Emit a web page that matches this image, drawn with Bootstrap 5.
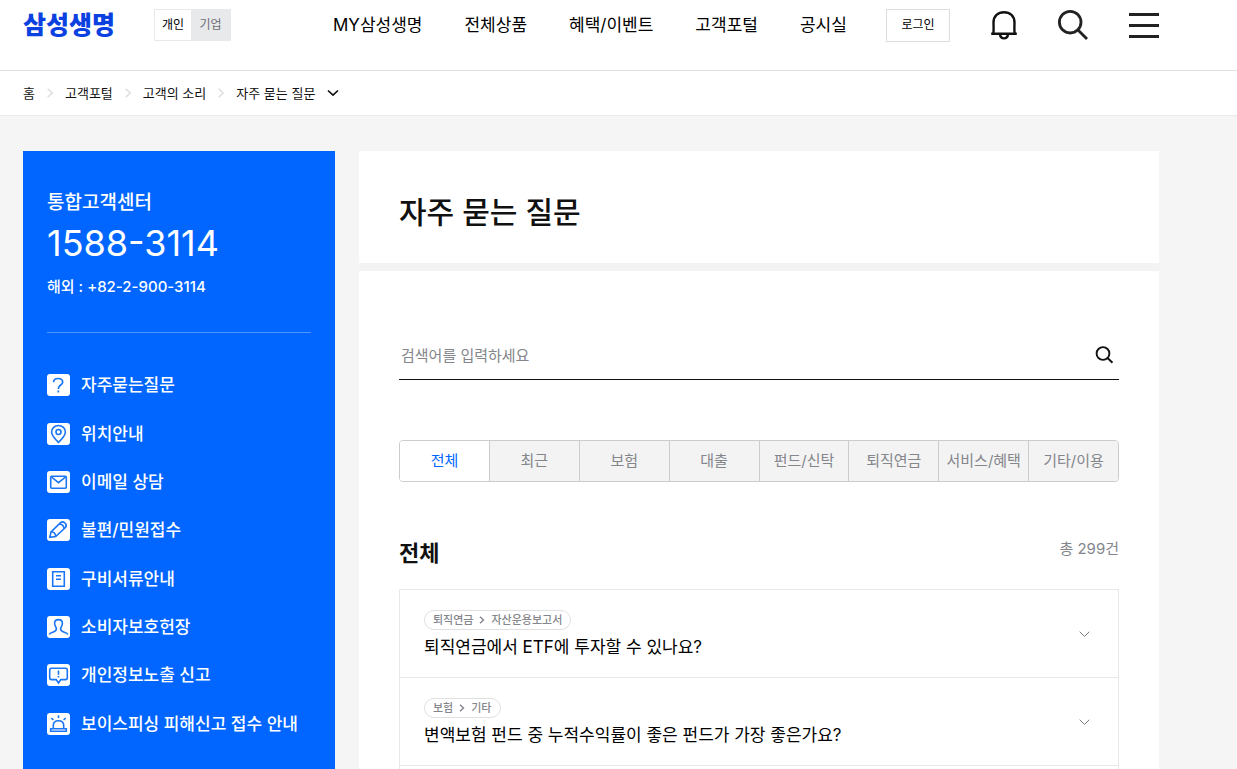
<!DOCTYPE html>
<html lang="ko">
<head>
<meta charset="utf-8">
<meta name="viewport" content="width=device-width, initial-scale=1">
<title>자주 묻는 질문 | 삼성생명</title>
<link href="https://cdn.jsdelivr.net/npm/bootstrap@5.3.0/dist/css/bootstrap.min.css" rel="stylesheet">
<style>
  body { font-family: Inter, "Noto Sans CJK KR", sans-serif; font-size: 17px; line-height: 24px; color: #000; background: #f5f5f5; }
  a { color: inherit; text-decoration: none; }
  button { color: inherit; }
  svg { display: block; flex: none; fill: none; }
  svg:not([stroke]) { stroke: currentColor; }
  .wrap { padding-left: 23px; padding-right: 78px; }
  .site-head { flex: none; border-bottom: 1px solid #e2e2e2; padding-bottom: 20px; }
  .head-row { height: 50px; }
  .brand { width: 131px; font-size: 25px; font-weight: 900; color: #0a41e0; line-height: 32px; }
  .seg { width: 77px; height: 32px; border: 1px solid #e8e9eb; font-size: 12px; margin-right: 102px; }
  .seg a { width: 36px; line-height: 30px; text-align: center; }
  .seg a + a { flex: 1; background: #e8e9eb; color: #6b6e74; }
  .gnb { gap: 42px; }
  .tools { gap: 41px; }
  .login { width: 64px; height: 33px; border: 1px solid #ddd; background: #fff; font-size: 12px; padding: 0; }
  .plain { border: 0; background: none; padding: 0; }
  .crumbs { flex: none; height: 45px; border-bottom: 1px solid #ebebeb; font-size: 13px; color: #111; }
  .crumbs ol { gap: 12px; }
  .crumbs li { display: flex; align-items: center; gap: 12px; }
  .page-body { padding-top: 35px; gap: 24px; min-height: 0; overflow: hidden; }
  .side { width: 312px; flex: none; background: #06f; color: #fff; padding: 37px 24px 0; font-weight: 500; }
  .side-title { font-size: 19px; line-height: 30px; }
  .tel { font-size: 36px; line-height: 50px; font-weight: 400; }
  .tel-abroad { font-size: 15px; line-height: 37px; }
  .side hr { margin: 27px 0 28px; border-top: 1px solid #4d94ff; opacity: 1; }
  .menu { height: 387px; display: grid; grid-template-rows: repeat(8, 1fr); align-items: center; }
  .menu a { display: flex; align-items: center; gap: 11px; }
  .menu svg { background: #fff; border-radius: 3px; color: #1a76f5; }
  .panel { background: #fff; padding: 0 40px; }
  .title-panel { height: 112px; padding-top: 40px; }
  .title-panel h1 { font-size: 30px; line-height: 42px; font-weight: 500; margin: 0; color: #111; }
  .gapline { height: 8px; background: #f3f3f3; }
  .list-panel { padding-top: 60px; }
  .search { height: 49px; border-bottom: 1px solid #111; }
  .search input { flex: 1; min-width: 0; border: 0; outline: 0; padding: 0 2px; font-size: 15px; height: 48px; }
  .search input::placeholder { color: #84868c; opacity: 1; }
  .tabs { margin-top: 60px; height: 42px; border: 1px solid #ccc; border-radius: 4px; overflow: hidden; font-size: 15px; color: #84868c; }
  .tabs button { flex: 1 1 0; min-width: 0; white-space: nowrap; background: #f3f3f3; border: 0; padding: 0; }
  .tabs button + button { border-left: 1px solid #ccc; }
  .tabs .on { background: #fff; color: #06f; }
  .list-top { margin-top: 54px; height: 53px; }
  .list-top h2 { font-size: 22px; line-height: 34px; font-weight: 700; margin: 0; color: #111; }
  .total { font-size: 15px; line-height: 26px; color: #84868c; }
  .faq { border: 1px solid #e6e8ea; }
  .faq li { min-height: 88px; border-bottom: 1px solid #e6e8ea; }
  .faq button { width: 100%; height: 87px; padding: 0 28px 2px 24px; text-align: left; }
  .faq button > svg { margin-top: 4px; }
  .path { display: inline-flex; align-items: center; gap: 6px; height: 20px; padding: 0 8px; border: 1px solid #e0e0e0; border-radius: 10px; font-size: 11px; font-weight: 500; color: #84868c; line-height: 18px; }
  .q { display: block; line-height: 26px; margin-top: 4px; }
</style>
</head>
<body class="vh-100 overflow-hidden d-flex flex-column">
<header class="site-head bg-white wrap">
  <div class="head-row d-flex align-items-center">
    <a class="brand" href="#">삼성생명</a>
    <div class="seg d-flex"><a href="#">개인</a><a href="#">기업</a></div>
    <nav class="gnb d-flex"><a href="#">MY삼성생명</a><a href="#">전체상품</a><a href="#">혜택/이벤트</a><a href="#">고객포털</a><a href="#">공시실</a></nav>
    <div class="tools d-flex align-items-center ms-auto">
      <button class="login" type="button">로그인</button>
      <button class="plain" type="button" aria-label="알림"><svg width="26" height="30" viewBox="0 0 26 30" stroke="#111" stroke-width="2.4"><path d="M2.2 23.7C3 20.5 2.500 17 2.500 12.500C2.500 6 7 2.200 13 2.200S23.500 6 23.500 12.500C23.500 17 23 20.500 23.800 23.700M.2 23.800H25.800M8.900 24C9.300 27 10.800 28.400 13 28.400S16.700 27 17.100 24"/></svg></button>
      <button class="plain" type="button" aria-label="검색"><svg width="30" height="30" viewBox="0 0 30 30" stroke="#222" stroke-width="2.800"><circle cx="12.200" cy="12.200" r="10.800"/><path d="M20 20l9 9"/></svg></button>
      <button class="plain" type="button" aria-label="전체메뉴"><svg width="30" height="26" viewBox="0 0 30 26" stroke="#222" stroke-width="3"><path d="M0 2.500H30M0 13.500H30M0 24.500H30"/></svg></button>
    </div>
  </div>
</header>
<nav class="crumbs bg-white wrap d-flex align-items-center" aria-label="현재 위치">
  <ol class="list-unstyled d-flex mb-0">
    <li><a href="#">홈</a><svg width="6" height="10" viewBox="0 0 6 10" stroke="#ddd" stroke-width="1.500"><path d="M.7.7L5.200 5L.7 9.300"/></svg></li>
    <li><a href="#">고객포털</a><svg width="6" height="10" viewBox="0 0 6 10" stroke="#ddd" stroke-width="1.500"><path d="M.7.7L5.200 5L.7 9.300"/></svg></li>
    <li><a href="#">고객의 소리</a><svg width="6" height="10" viewBox="0 0 6 10" stroke="#ddd" stroke-width="1.500"><path d="M.7.7L5.200 5L.7 9.300"/></svg></li>
    <li><a href="#">자주 묻는 질문</a><button class="plain" type="button" aria-label="하위 메뉴 열기"><svg width="12" height="8" viewBox="0 0 12 8" stroke="#111" stroke-width="1.700"><path d="M1 1.500L6 6.200L11 1.500"/></svg></button></li>
  </ol>
</nav>
<div class="page-body wrap d-flex flex-grow-1">
  <aside class="side">
    <div class="side-title">통합고객센터</div>
    <div class="tel">1588-3114</div>
    <div class="tel-abroad">해외 : +82-2-900-3114</div>
    <hr>
    <ul class="menu list-unstyled mb-0">
      <li><a href="#"><svg width="23" height="22" viewBox="0 0 23 22" stroke-width="1.700"><path d="M6.600 8.200C6.600 5.700 8.500 4.500 11.100 4.500S15.700 5.900 15.700 8.200C15.700 11 11.300 10.700 11.300 15M11.300 16.500V18.500"/></svg>자주묻는질문</a></li>
      <li><a href="#"><svg width="23" height="22" viewBox="0 0 23 22" stroke-width="1.600"><path d="M11.500 19.300C8.500 16.500 4.600 12.700 4.600 9A6.900 6.500 0 0 1 18.400 9C18.400 12.700 14.500 16.500 11.500 19.300Z"/><circle cx="11.500" cy="9" r="2.500"/></svg>위치안내</a></li>
      <li><a href="#"><svg width="23" height="22" viewBox="0 0 23 22" stroke-width="1.600"><rect x="3.700" y="5.200" width="15.600" height="12" rx="1"/><path d="M4.500 6L11.500 11.700L18.500 6"/></svg>이메일 상담</a></li>
      <li><a href="#"><svg width="23" height="22" viewBox="0 0 23 22" stroke-width="1.600"><path d="M2.800 18.300L4 12.800L13.600 3.700C16.200 1.300 21 5.400 18.400 8.500L8.700 17.500ZM4 12.800C6.800 13 8.600 14.800 8.700 17.500M12.200 5C15 5.200 16.900 7 17 9.800"/></svg>불편/민원접수</a></li>
      <li><a href="#"><svg width="23" height="22" viewBox="0 0 23 22" stroke-width="1.600"><path d="M5.700 3.700H17.300V18.300H5.700ZM9 7.700H14M9 11.300H14"/></svg>구비서류안내</a></li>
      <li><a href="#"><svg width="23" height="22" viewBox="0 0 23 22" stroke-width="1.600"><path d="M2.200 18.500C3.200 15.500 9.400 16.800 9.400 13C9.400 11 7.600 10 7.600 7.200C7.600 5 9 3.600 11.500 3.600S15.400 5 15.400 7.200C15.400 10 13.600 11 13.600 13C13.600 16.800 19.800 15.500 20.800 18.500"/></svg>소비자보호헌장</a></li>
      <li><a href="#"><svg width="23" height="22" viewBox="0 0 23 22" stroke-width="1.600"><path d="M4.500 4.200H18.500Q20.300 4.200 20.300 6V13.800Q20.300 15.600 18.500 15.600H13.800L11.500 19L9.200 15.600H4.500Q2.700 15.600 2.700 13.800V6Q2.700 4.200 4.500 4.200ZM11.500 6.500V10.700M11.500 12V13.600"/></svg>개인정보노출 신고</a></li>
      <li><a href="#"><svg width="23" height="22" viewBox="0 0 23 22" stroke-width="1.600"><path d="M6.300 15V12.500C6.300 9.500 8.400 7.800 11.500 7.800S16.700 9.500 16.700 12.500V15M3.700 15.700H19.300V18.200H3.700ZM11.500 2.200V5M4.300 5L6.400 7M18.700 5L16.600 7"/></svg>보이스피싱 피해신고 접수 안내</a></li>
    </ul>
  </aside>
  <main class="flex-grow-1">
    <div class="panel title-panel"><h1>자주 묻는 질문</h1></div>
    <div class="gapline"></div>
    <section class="panel list-panel">
      <form class="search d-flex align-items-center">
        <input type="text" placeholder="검색어를 입력하세요" aria-label="검색어">
        <button class="plain me-1" type="button" aria-label="검색"><svg width="20" height="20" viewBox="0 0 20 20" stroke="#111" stroke-width="1.900"><circle cx="8" cy="8.500" r="6.400"/><path d="M12.500 13l5 4.700"/></svg></button>
      </form>
      <div class="tabs d-flex">
        <button type="button" class="on">전체</button><button type="button">최근</button><button type="button">보험</button><button type="button">대출</button><button type="button">펀드/신탁</button><button type="button">퇴직연금</button><button type="button">서비스/혜택</button><button type="button">기타/이용</button>
      </div>
      <div class="list-top d-flex justify-content-between align-items-start">
        <h2>전체</h2><span class="total">총 299건</span>
      </div>
      <ul class="faq list-unstyled mb-0">
        <li><button class="plain d-flex align-items-center justify-content-between" type="button"><span><span class="path">퇴직연금<svg width="6" height="8" viewBox="0 0 6 8" stroke-width="1.400"><path d="M1 .7L4.500 4L1 7.300"/></svg>자산운용보고서</span><span class="q">퇴직연금에서 ETF에 투자할 수 있나요?</span></span><svg width="11" height="7" viewBox="0 0 11 7" stroke="#777a80"><path d="M.7.7L5.500 5.500L10.300.7"/></svg></button></li>
        <li><button class="plain d-flex align-items-center justify-content-between" type="button"><span><span class="path">보험<svg width="6" height="8" viewBox="0 0 6 8" stroke-width="1.400"><path d="M1 .7L4.500 4L1 7.300"/></svg>기타</span><span class="q">변액보험 펀드 중 누적수익률이 좋은 펀드가 가장 좋은가요?</span></span><svg width="11" height="7" viewBox="0 0 11 7" stroke="#777a80"><path d="M.7.7L5.500 5.500L10.300.7"/></svg></button></li>
        <li></li>
      </ul>
    </section>
  </main>
</div>
<script src="https://cdn.jsdelivr.net/npm/bootstrap@5.3.0/dist/js/bootstrap.bundle.min.js"></script>
</body>
</html>
